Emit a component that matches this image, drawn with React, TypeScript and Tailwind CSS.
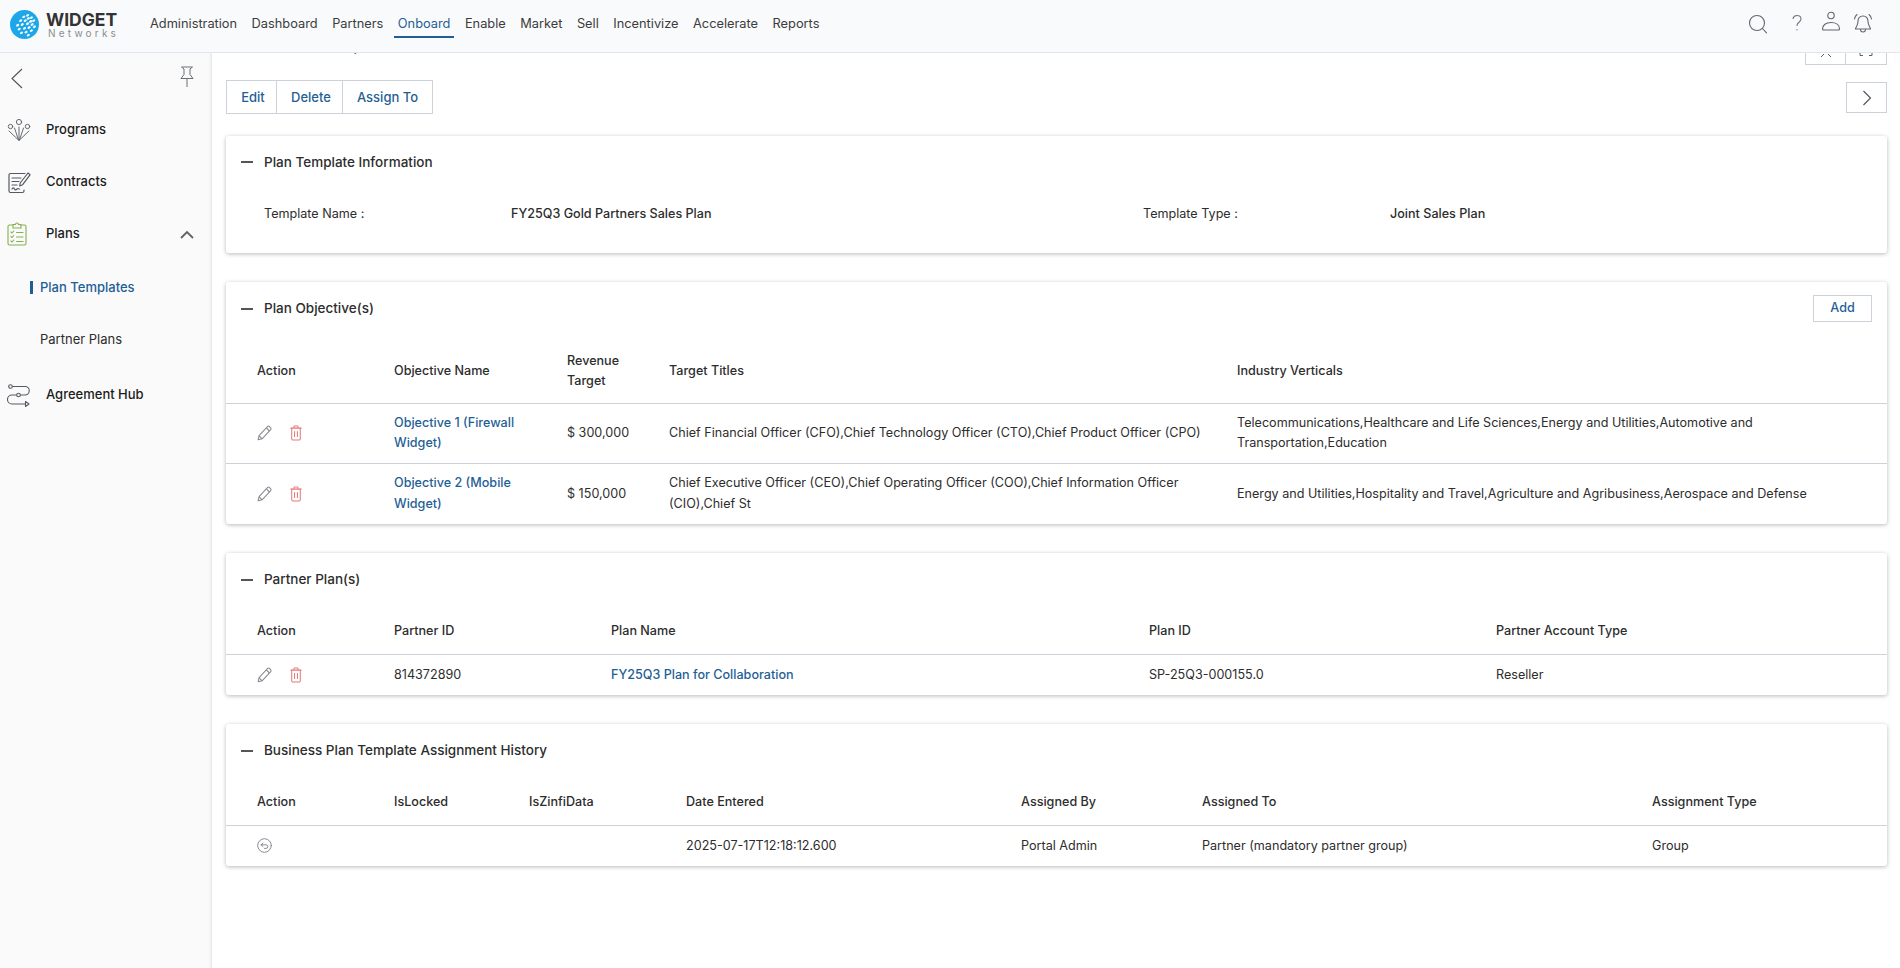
import React from "react";

const navItems = ["Administration","Dashboard","Partners","Onboard","Enable","Market","Sell","Incentivize","Accelerate","Reports"];

function Logo() {
  const dots: [number, number][] = [[10,20],[14,14],[18,9],[23,7],[12,25],[16,19],[20,14],[24,11],[28,10],[15,30],[19,24],[23,18],[27,15],[31,14],[21,29],[25,23],[29,19],[24,33],[28,27],[32,22]];
  return (
    <svg width="29" height="29" viewBox="0 0 38 38" className="shrink-0">
      <circle cx="19" cy="19" r="19" fill="#1ea7e8" />
      {dots.map(([x, y], i) => <ellipse key={i} cx={x} cy={y} rx="2.2" ry="1.5" fill="#fff" transform={`rotate(-35 ${x} ${y})`} />)}
    </svg>
  );
}

const Pencil = () => (
  <svg width="15" height="16" viewBox="0 0 16 16" preserveAspectRatio="none" fill="none" stroke="#84888f" strokeWidth="1.1" strokeLinejoin="round">
    <path d="M1.2 14.8l1-4.2L11.4 1.4a1.2 1.2 0 0 1 1.7 0l1.5 1.5a1.2 1.2 0 0 1 0 1.7L5.4 13.8z" />
    <path d="M2.2 10.6l3.2 3.2M10 2.8l3.2 3.2" />
  </svg>
);
const Trash = () => (
  <svg width="12" height="16" viewBox="0 0 14 16" preserveAspectRatio="none" fill="none" stroke="#e27b7b" strokeWidth="1.2" strokeLinecap="round">
    <path d="M1 3.2h12M4.6 3V1.7c0-.4.3-.7.7-.7h3.4c.4 0 .7.3.7.7V3" />
    <path d="M2 3.2v10.6c0 .7.5 1.2 1.2 1.2h7.6c.7 0 1.2-.5 1.2-1.2V3.2" />
    <path d="M5.3 6.5v5M8.7 6.5v5" />
  </svg>
);
const Undo = () => (
  <svg width="15" height="15" viewBox="0 0 15 15" fill="none" stroke="#7d8188" strokeWidth="0.9" strokeLinecap="round" strokeLinejoin="round">
    <circle cx="7.5" cy="7.5" r="6.8" />
    <path d="M6 5L4 6.8 6 8.6M4 6.8h5a1.7 1.7 0 0 1 0 3.6H7.5" />
  </svg>
);
const Minus = () => <span className="block w-3 h-0.5 bg-[#555]" />;

function CardTitle({ title, right }: { title: string; right?: React.ReactNode }) {
  return (
    <div className="flex items-center justify-between pl-[15px] pr-[15px]">
      <div className="flex items-center gap-[11px] text-[13.5px] font-medium text-[#2d2d2d]">
        <Minus />
        <span>{title}</span>
      </div>
      {right}
    </div>
  );
}

const Link = ({ children }: { children: React.ReactNode }) => <span className="text-[#1f5f96] font-medium">{children}</span>;

function Table({ widths, headers, rows, headH, rowHs, thCls = "" }: { widths: number[]; headers: string[]; rows: React.ReactNode[][]; headH: number; rowHs: number[]; thCls?: string }) {
  return (
    <table className="w-full table-fixed border-collapse text-[12.6px] leading-[20.5px]">
      <colgroup>
        {widths.map((w, i) => <col key={i} style={{ width: w || undefined }} />)}
      </colgroup>
      <thead>
        <tr className="border-b border-[#ccd2da]" style={{ height: headH }}>
          {headers.map((h, i) => (
            <th key={i} className={`text-left font-medium text-[#2d2d2d] pr-4 ${thCls} ${i === 0 ? "pl-[31px]" : ""}`}>{h}</th>
          ))}
        </tr>
      </thead>
      <tbody>
        {rows.map((r, ri) => (
          <tr key={ri} className={ri < rows.length - 1 ? "border-b border-[#ccd2da]" : ""} style={{ height: rowHs[ri] }}>
            {r.map((c, i) => (
              <td key={i} className={`align-middle text-[#2d2d2d] pr-4 ${i === 0 ? "pl-[31px]" : ""}`}>{c}</td>
            ))}
          </tr>
        ))}
      </tbody>
    </table>
  );
}

const Actions = () => (
  <div className="flex items-center gap-[18px]"><Pencil /><Trash /></div>
);

const cardCls = "bg-white rounded-[3px] shadow-[0_1px_4px_rgba(0,0,0,0.28)]";

function SideIcon({ name }: { name: string }) {
  const s = "#555a62";
  if (name === "Programs") return (
    <svg width="24" height="24" viewBox="0 0 24 24" fill="none" stroke={s} strokeWidth="0.9" strokeLinecap="round" strokeLinejoin="round">
      <circle cx="12" cy="4" r="2.6" /><circle cx="3.5" cy="8.500" r="2.200" /><circle cx="20.500" cy="8.500" r="2.200" />
      <path d="M11.500 22L2 13M11.500 22L7.500 10M12.500 22L16.500 10M12.500 22L22 13M12 22V9" />
    </svg>
  );
  if (name === "Contracts") return (
    <svg width="24" height="24" viewBox="0 0 24 24" fill="none" stroke={s} strokeWidth="1.2" strokeLinecap="round" strokeLinejoin="round">
      <path d="M17 20v1a1.5 1.5 0 0 1-1.5 1.5h-12A1.5 1.5 0 0 1 2 21V5a1.5 1.5 0 0 1 1.5-1.5H18" />
      <path d="M5 8h9M5 11.5h7M5 15h5" />
      <path d="M21 3l2 1.8-7.5 10-2.8 1.2.5-3z" />
      <path d="M5 19c1-1.5 2-1.5 2.5 0s1.500 1 2.500 0 1.500 0 2.500 0" />
    </svg>
  );
  if (name === "Plans") return (
    <svg width="20" height="24" viewBox="0 0 20 24" fill="none" stroke="#86b04f" strokeWidth="1.1" strokeLinecap="round" strokeLinejoin="round">
      <path d="M6 3H2.500A1.500 1.500 0 0 0 1 4.500v17A1.500 1.500 0 0 0 2.500 23h15a1.500 1.500 0 0 0 1.500-1.500v-17A1.500 1.500 0 0 0 17.500 3H14" />
      <path d="M6 2.500h2.500a1.500 1.500 0 0 1 3 0H14V6H6z" />
      <path d="M4 10l1 1 1.800-2M4 14.500l1 1 1.800-2M4 19l1 1 1.800-2M9.500 10.500H16M9.500 15H16M9.500 19.500H16" />
    </svg>
  );
  return (
    <svg width="24" height="24" viewBox="0 0 24 24" fill="none" stroke={s} strokeWidth="1.1" strokeLinecap="round" strokeLinejoin="round">
      <circle cx="3.500" cy="3.500" r="1.800" /><circle cx="11.500" cy="12" r="1.800" />
      <path d="M5.500 3.500H18a4.200 4.200 0 0 1 0 8.500h-4.500M9.500 12H5a4.500 4.500 0 0 0 0 9h13" />
      <path d="M18.500 18.500v5l3.500-2.500z" />
    </svg>
  );
}

function SideRow({ name, chevron }: { name: string; chevron?: boolean }) {
  return (
    <div className="h-[52px] flex items-center pl-[6px] pr-[18px]">
      <div className="w-[40px] flex items-center pl-[1px]"><SideIcon name={name} /></div>
      <span className="text-[13px] font-medium text-[#1c1c1c] flex-1">{name}</span>
      {chevron && (
        <svg width="14" height="9" viewBox="0 0 14 9" fill="none" stroke="#5f6368" strokeWidth="1.800"><path d="M1 8l6-6 6 6" /></svg>
      )}
    </div>
  );
}

function OutBtn({ children, cls = "" }: { children: React.ReactNode; cls?: string }) {
  return <button className={`border border-[#ccd2da] bg-white text-[13px] font-medium text-[#1f5f96] flex items-center justify-center ${cls}`}>{children}</button>;
}

export default function App() {
  return (
    <div className="h-[968px] w-[1900px] overflow-hidden flex flex-col bg-white font-['Inter',sans-serif]">
      <header className="relative z-20 h-[53px] shrink-0 bg-[#f9fafb] border-b border-[#e3e6ea] flex items-center pl-[10px] pr-[27px]">
        <div className="flex items-center -mt-[4px]">
          <Logo />
          <div className="ml-[7px] w-[72px] flex flex-col">
            <span className="text-[17.5px] font-bold leading-[17px] text-[#333]">WIDGET</span>
            <span className="text-[10px] leading-[10px] text-[#8a8d92] tracking-[3.2px] pl-[2px]">Networks</span>
          </div>
        </div>
        <nav className="ml-[28px] flex items-center gap-[6.5px] text-[12.8px] text-[#3c3c3c]">
          {navItems.map((n) => (
            <span key={n} className={`px-1 h-[29px] -mt-[6px] pt-[4px] flex items-center border-b-2 ${n === "Onboard" ? "text-[#1f5f96] border-[#1f5f96]" : "border-transparent"}`}>{n}</span>
          ))}
        </nav>
        <div className="ml-auto self-start flex items-start">
          <svg width="20" height="20" viewBox="0 0 20 20" fill="none" stroke="#62666c" strokeWidth="1.100" strokeLinecap="round" className="mt-[14px]"><circle cx="9" cy="9" r="7.500" /><path d="M14.500 14.500l4 4.300" /></svg>
          <svg width="20" height="20" viewBox="0 0 20 20" fill="none" stroke="#73777d" strokeWidth="1.100" strokeLinecap="round" className="mt-[14px] ml-[19px]"><path d="M6 4.500C6.500 2.500 8 1.500 10 1.500c2.500 0 4 1.600 4 3.500 0 3-4 3.500-4 6.500M10 15.500v.5" /></svg>
          <svg width="20" height="20" viewBox="0 0 20 20" fill="none" stroke="#62666c" strokeWidth="1.100" className="mt-[11px] ml-[14px]"><circle cx="10" cy="4.500" r="3.200" /><path d="M1.500 18c0-4 3.500-6.500 8.500-6.500s8.500 2.500 8.500 6.500c0 .5-.3 1-1 1H2.500c-.7 0-1-.5-1-1z" /></svg>
          <svg width="20" height="22" viewBox="0 0 20 22" fill="none" stroke="#62666c" strokeWidth="1.100" strokeLinecap="round" strokeLinejoin="round" className="mt-[13px] ml-[12px]"><path d="M10 3c3.500 0 5 2.500 5 5.500 0 4 2.500 6 2.500 7.500h-15C2.500 14.500 5 12.500 5 8.500 5 5.500 6.500 3 10 3z" /><path d="M7.500 16.500a2.500 2.500 0 0 0 5 0M1.500 6C1.800 4 2.700 2.500 4 1.500M18.500 6C18.200 4 17.300 2.500 16 1.500" /></svg>
        </div>
      </header>

      <div className="flex flex-1 min-h-0">
        <aside className="relative z-10 w-[212px] shrink-0 bg-[#fafafa] shadow-[inset_-3px_0_3px_-2px_rgba(0,0,0,0.1)]">
          <div className="flex items-center justify-between pl-[11px] pr-[18px] h-[51px] pb-[1px]">
            <svg width="12" height="21" viewBox="0 0 12 21" fill="none" stroke="#4f5257" strokeWidth="1.100"><path d="M11 1L1 10.500 11 20" /></svg>
            <svg width="14" height="22" viewBox="0 0 14 22" fill="none" stroke="#6b6f75" strokeWidth="1" strokeLinejoin="round" className="-mt-[3px]"><path d="M1.500 1h11l-2.500 2v5.500l3 4H1l3-4V3zM7 12.500V21" /></svg>
          </div>
          <SideRow name="Programs" />
          <SideRow name="Contracts" />
          <SideRow name="Plans" chevron />
          <div className="h-[55px] flex items-center pl-[30px] gap-[7px]">
            <span className="w-[3px] h-[13px] bg-[#1f5f96]" />
            <span className="text-[13px] font-medium text-[#1f5f96]">Plan Templates</span>
          </div>
          <div className="h-[50px] mb-[4px] flex items-center pl-[40px] text-[13px] text-[#2d2d2d]">Partner Plans</div>
          <SideRow name="Agreement Hub" />
        </aside>

        <main className="flex-1 min-w-0 overflow-hidden pl-[14px] pr-[13px]">
          <div className="-mt-[17px]">
            <div className="flex items-start justify-between h-[44px]">
              <span className="text-[14px] font-medium leading-[20px] text-[#2d2d2d] pl-[2px]">Business Plan Template</span>
              <div className="flex -mt-[1px]">
                <OutBtn cls="w-[41px] h-[30px] items-end pb-[7px]">
                  <svg width="12" height="6" viewBox="0 0 12 6" fill="none" stroke="#5f6368" strokeWidth="1"><path d="M1 6l3-3M11 6L8 3M6 0v0" /></svg>
                </OutBtn>
                <OutBtn cls="w-[41px] h-[30px] border-l-0 items-end pb-[7px]">
                  <svg width="14" height="6" viewBox="0 0 14 6" fill="none" stroke="#5f6368" strokeWidth="1"><path d="M1 0v4.500h3M13 0v4.500h-3" /></svg>
                </OutBtn>
              </div>
            </div>
            <div className="flex items-start justify-between h-[56px]">
              <div className="flex">
                <OutBtn cls="w-[51px] h-[34px] pl-[3px] pt-[2px]">Edit</OutBtn>
                <OutBtn cls="w-[66px] h-[34px] border-l-0 pl-[3px] pt-[2px]">Delete</OutBtn>
                <OutBtn cls="w-[90px] h-[34px] border-l-0 pt-[2px] text-[12.8px]">Assign To</OutBtn>
              </div>
              <OutBtn cls="w-[41px] h-[31px] mt-[2px]">
                <svg width="10" height="16" viewBox="0 0 10 16" fill="none" stroke="#4f5257" strokeWidth="1.100"><path d="M1.500 1l7 7-7 7" /></svg>
              </OutBtn>
            </div>

            <section className={`${cardCls} h-[117px] mb-[29px]`}>
              <div className="pt-[16px]"><CardTitle title="Plan Template Information" /></div>
              <div className="grid grid-cols-[247px_632px_247px_1fr] pl-[38px] pt-[33px] text-[12.6px] text-[#2d2d2d]">
                <span>Template Name :</span>
                <span className="font-medium">FY25Q3 Gold Partners Sales Plan</span>
                <span>Template Type :</span>
                <span className="font-medium">Joint Sales Plan</span>
              </div>
            </section>

            <section className={`${cardCls} mb-[29px]`}>
              <div className="h-[58px] pb-[5px] flex flex-col justify-center">
                <CardTitle title="Plan Objective(s)" right={
                  <button className="w-[59px] h-[27px] border border-[#ccd2da] text-[12.6px] font-medium text-[#1f5f96]">Add</button>
                } />
              </div>
              <Table
                widths={[168, 173, 102, 568, 0]}
                headH={63}
                rowHs={[60, 61]}
                headers={["Action", "Objective Name", "Revenue Target", "Target Titles", "Industry Verticals"]}
                rows={[
                  [<Actions />, <Link>Objective 1 (Firewall Widget)</Link>, "$ 300,000", "Chief Financial Officer (CFO),Chief Technology Officer (CTO),Chief Product Officer (CPO)", "Telecommunications,Healthcare and Life Sciences,Energy and Utilities,Automotive and Transportation,Education"],
                  [<Actions />, <Link>Objective 2 (Mobile Widget)</Link>, "$ 150,000", "Chief Executive Officer (CEO),Chief Operating Officer (COO),Chief Information Officer (CIO),Chief St", "Energy and Utilities,Hospitality and Travel,Agriculture and Agribusiness,Aerospace and Defense"],
                ]}
              />
            </section>

            <section className={`${cardCls} mb-[29px]`}>
              <div className="h-[53px] flex flex-col justify-center"><CardTitle title="Partner Plan(s)" /></div>
              <Table
                widths={[168, 217, 538, 347, 0]}
                headH={48}
                rowHs={[41]}
                thCls="pt-[3px]"
                headers={["Action", "Partner ID", "Plan Name", "Plan ID", "Partner Account Type"]}
                rows={[[<Actions />, "814372890", <Link>FY25Q3 Plan for Collaboration</Link>, "SP-25Q3-000155.0", "Reseller"]]}
              />
            </section>

            <section className={cardCls}>
              <div className="h-[53px] flex flex-col justify-center"><CardTitle title="Business Plan Template Assignment History" /></div>
              <Table
                widths={[168, 135, 157, 335, 181, 450, 0]}
                headH={48}
                rowHs={[41]}
                thCls="pt-[3px]"
                headers={["Action", "IsLocked", "IsZinfiData", "Date Entered", "Assigned By", "Assigned To", "Assignment Type"]}
                rows={[[<Undo />, "", "", "2025-07-17T12:18:12.600", "Portal Admin", "Partner (mandatory partner group)", "Group"]]}
              />
            </section>
          </div>
        </main>
      </div>
    </div>
  );
}
